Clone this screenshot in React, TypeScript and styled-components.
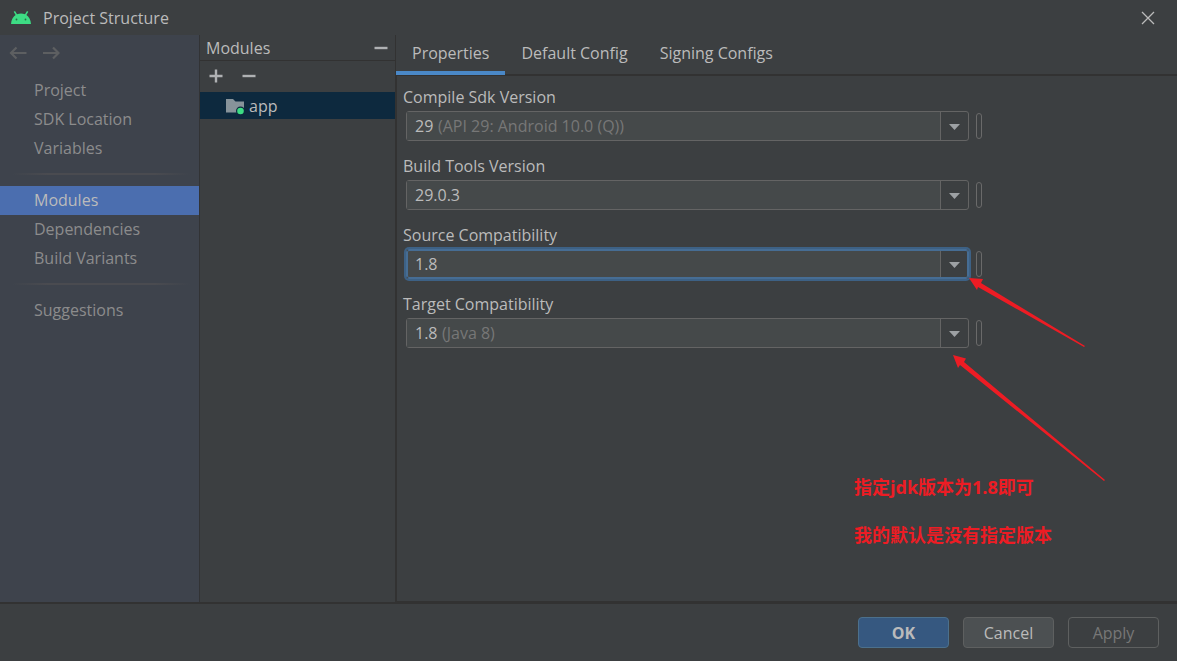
import React from "react";
import styled, { createGlobalStyle } from "styled-components";

const GlobalStyle = createGlobalStyle`
  *, *::before, *::after { box-sizing: border-box; }
  body {
    margin: 0;
    background: #3c3f41;
    color: #bbbbbb;
    font: 16px/24px "Open Sans", "Noto Sans", "Noto Sans CJK SC", sans-serif;
  }
  button, select { font: inherit; color: inherit; }
  h1, h2, p { margin: 0; font: inherit; }
`;

const Dialog = styled.div`
  position: relative;
  display: flex;
  flex-direction: column;
  min-height: 100vh;
  overflow: hidden;
`;

const TitleBar = styled.header`
  display: flex;
  align-items: center;
  gap: 12px;
  height: 35px;
  padding: 0 22px 0 11px;
`;

const Title = styled.h1`
  flex: 1;
`;

const IconButton = styled.button`
  display: flex;
  padding: 0;
  border: 0;
  background: none;
  svg { display: block; }
`;

const Body = styled.div`
  flex: 1;
  display: flex;
`;

const Sidebar = styled.nav`
  flex: 0 0 200px;
  background: #3e434c;
  border-right: 1px solid #323335;
`;

const History = styled.div`
  display: flex;
  gap: 15px;
  height: 41px;
  padding: 9px 9px 0;
`;

const NavLink = styled.a<{ $active?: boolean }>`
  display: block;
  height: 29px;
  padding-left: 34px;
  line-height: 29px;
  text-decoration: none;
  color: ${(p) => (p.$active ? "#bbbbbb" : "#8c8c8c")};
  background: ${(p) => (p.$active ? "#4b6eaf" : "transparent")};
`;

const NavDivider = styled.hr`
  height: 2px;
  margin: 10px 9px 11px 12px;
  border: 0;
  background: linear-gradient(90deg, transparent, #4a4b50 20%, #4a4b50 80%, transparent);
`;

const ModuleColumn = styled.section`
  flex: 0 0 196px;
  border-right: 1px solid #323232;
`;

const ModuleHeader = styled.div`
  display: flex;
  align-items: center;
  justify-content: space-between;
  height: 26px;
  padding: 0 6px;
  border-bottom: 1px solid #323232;
`;

const ModuleTools = styled.div`
  display: flex;
  align-items: center;
  gap: 17px;
  height: 31px;
  padding: 0 0 2px 8px;
`;

const ModuleRow = styled.button`
  display: flex;
  align-items: center;
  gap: 5px;
  width: 100%;
  height: 27px;
  padding: 0 26px;
  border: 0;
  background: #0d293e;
`;

const Main = styled.main`
  flex: 1;
  display: flex;
  flex-direction: column;
  min-width: 0;
`;

const Tabs = styled.div`
  display: flex;
  height: 41px;
  border-bottom: 2px solid #323232;
`;

const Tab = styled.button<{ $active?: boolean }>`
  height: 40px;
  padding: 0 16px 4px;
  border: 0;
  background: none;
  box-shadow: ${(p) => (p.$active ? "inset 0 -4px #4a88c7" : "none")};
`;

const Form = styled.form`
  flex: 1;
  padding: 9px 6px;
  border-left: 1px solid #323232;
  border-bottom: 1px solid #323232;
`;

const Field = styled.div`
  height: 69px;
`;

const FieldLabel = styled.label`
  display: block;
  height: 26px;
`;

const FieldLine = styled.div`
  display: flex;
  align-items: center;
  gap: 7px;
  padding-left: 3px;
`;

const Combo = styled.div<{ $focused?: boolean }>`
  flex: 0 1 563px;
  display: flex;
  height: 30px;
  border: 1px solid ${(p) => (p.$focused ? "#466d94" : "#646464")};
  border-radius: 3px;
  box-shadow: ${(p) => (p.$focused ? "0 0 0 2px #3d6185" : "none")};
  outline: ${(p) => (p.$focused ? "1px solid #466d94" : "none")};
  outline-offset: -2px;
`;

const ComboValue = styled.div`
  flex: 1;
  display: flex;
  align-items: center;
  gap: 4px;
  padding-left: 8px;
  background: #45494a;
`;

const Select = styled.select`
  appearance: none;
  padding: 0;
  border: 0;
  outline: 0;
  background: none;
`;

const Hint = styled.span`
  color: #777777;
`;

const ComboArrow = styled.button`
  width: 28px;
  padding: 1px 0 0 8px;
  border: 0;
  border-left: 1px solid #646464;
  background: none;
  svg { display: block; }
`;

const VariableButton = styled.button`
  width: 6px;
  height: 26px;
  padding: 0;
  border: 1px solid #6a6a6a;
  border-radius: 3px;
  background: none;
`;

const Footer = styled.footer`
  display: flex;
  justify-content: flex-end;
  gap: 14px;
  padding: 13px 18px;
  border-top: 2px solid #323232;
`;

type Kind = "primary" | "normal" | "disabled";

const buttonFill = { primary: "#365880", normal: "#4c5052", disabled: "transparent" };
const buttonEdge = { primary: "#4c708c", normal: "#5e6060", disabled: "#5e6060" };

const Button = styled.button<{ $kind: Kind }>`
  width: 91px;
  height: 31px;
  padding: 0;
  border: 1px solid ${(p) => buttonEdge[p.$kind]};
  border-radius: 4px;
  background: ${(p) => buttonFill[p.$kind]};
  font-weight: ${(p) => (p.$kind === "primary" ? 700 : 400)};
  color: ${(p) => (p.$kind === "disabled" ? "#777777" : "#bbbbbb")};
`;

const Arrows = styled.svg`
  position: absolute;
  top: 270px;
  left: 940px;
  pointer-events: none;
`;

const Note = styled.div`
  position: absolute;
  top: 475px;
  left: 854px;
  display: grid;
  gap: 24px;
  color: #ed1c24;
  font: 700 18px/24px "Open Sans", "Noto Sans CJK SC", sans-serif;
  white-space: nowrap;
`;

const AndroidIcon = () => (
  <svg width="20" height="14" viewBox="0 0 20 14" aria-hidden="true">
    <path d="M0 13C.2 8.500 2.200 5.500 4.600 4L2.700 .8 4 .1 6 3.200Q10 1.800 14 3.200L16 .1 17.300 .8 15.400 4C17.800 5.500 19.800 8.500 20 13Z" fill="#3ddc84" />
    <circle cx="5.500" cy="8.500" r=".9" fill="#2b6b49" />
    <circle cx="14.500" cy="8.500" r=".9" fill="#2b6b49" />
  </svg>
);

const ArrowIcon = ({ forward }: { forward?: boolean }) => (
  <svg width="18" height="18" viewBox="0 0 18 18" fill="none" stroke="#5d5f61" strokeWidth="2.200" aria-hidden="true">
    <path d={forward ? "M1 9H16.500M11 3.500L16.500 9 11 14.500" : "M17.500 9H2M7.500 3.500L2 9 7.500 14.500"} />
  </svg>
);

const LineIcon = ({ plus }: { plus?: boolean }) => (
  <svg width="16" height="16" viewBox="0 0 16 16" fill="none" stroke="#afb1b3" strokeWidth="2.400" aria-hidden="true">
    <path d={plus ? "M1.500 8H14.500M8 1.500V14.500" : "M1.500 8H14.500"} />
  </svg>
);

const FolderIcon = () => (
  <svg width="18" height="18" viewBox="0 0 18 18" aria-hidden="true">
    <path d="M0 2H7L9.500 4.500H18V15.500H0Z" fill="#87939a" />
    <circle cx="14.500" cy="14" r="4.500" fill="#0d293e" />
    <circle cx="14.500" cy="14" r="3.300" fill="#3ddc84" />
  </svg>
);

type ComboFieldProps = { id: string; label: string; value: string; hint?: string; focused?: boolean };

const ComboField = ({ id, label, value, hint, focused }: ComboFieldProps) => (
  <Field>
    <FieldLabel htmlFor={id}>{label}</FieldLabel>
    <FieldLine>
      <Combo $focused={focused}>
        <ComboValue>
          <Select id={id} defaultValue={value}>
            <option>{value}</option>
          </Select>
          {hint && <Hint>{hint}</Hint>}
        </ComboValue>
        <ComboArrow type="button" aria-label={`Open ${label}`}>
          <svg width="12" height="6" viewBox="0 0 12 6" aria-hidden="true">
            <path d="M0 0H11L5.500 6Z" fill="#9da1a4" />
          </svg>
        </ComboArrow>
      </Combo>
      <VariableButton type="button" aria-label={`Bind ${label}`} />
    </FieldLine>
  </Field>
);

const groups = [
  ["Project", "SDK Location", "Variables"],
  ["Modules", "Dependencies", "Build Variants"],
  ["Suggestions"],
];

export default function App() {
  return (
    <>
      <GlobalStyle />
      <Dialog>
        <TitleBar>
          <AndroidIcon />
          <Title>Project Structure</Title>
          <IconButton aria-label="Close">
            <svg width="14" height="14" viewBox="0 0 14 14" stroke="#bbbbbb" strokeWidth="1.300" aria-hidden="true">
              <path d="M1 1L13 13M13 1L1 13" />
            </svg>
          </IconButton>
        </TitleBar>
        <Body>
          <Sidebar>
            <History>
              <IconButton aria-label="Back"><ArrowIcon /></IconButton>
              <IconButton aria-label="Forward"><ArrowIcon forward /></IconButton>
            </History>
            {groups.map((items, i) => (
              <React.Fragment key={items[0]}>
                {i > 0 && <NavDivider />}
                {items.map((item) => (
                  <NavLink key={item} href="#" $active={item === "Modules"}>{item}</NavLink>
                ))}
              </React.Fragment>
            ))}
          </Sidebar>
          <ModuleColumn>
            <ModuleHeader>
              <h2>Modules</h2>
              <IconButton aria-label="Hide"><LineIcon /></IconButton>
            </ModuleHeader>
            <ModuleTools>
              <IconButton aria-label="Add module"><LineIcon plus /></IconButton>
              <IconButton aria-label="Remove module"><LineIcon /></IconButton>
            </ModuleTools>
            <ModuleRow><FolderIcon />app</ModuleRow>
          </ModuleColumn>
          <Main>
            <Tabs role="tablist">
              <Tab role="tab" aria-selected $active>Properties</Tab>
              <Tab role="tab">Default Config</Tab>
              <Tab role="tab">Signing Configs</Tab>
            </Tabs>
            <Form>
              <ComboField id="compile-sdk" label="Compile Sdk Version" value="29" hint="(API 29: Android 10.0 (Q))" />
              <ComboField id="build-tools" label="Build Tools Version" value="29.0.3" />
              <ComboField id="source" label="Source Compatibility" value="1.8" focused />
              <ComboField id="target" label="Target Compatibility" value="1.8" hint="(Java 8)" />
            </Form>
          </Main>
        </Body>
        <Footer>
          <Button $kind="primary">OK</Button>
          <Button $kind="normal">Cancel</Button>
          <Button $kind="disabled" disabled>Apply</Button>
        </Footer>
        <Arrows width="170" height="215" viewBox="940 270 170 215" fill="#ed1c24" aria-hidden="true">
          <path d="M969 278L983 279 981 283 1085 346 1084 347 978 287 977 290Z" />
          <path d="M953 355L966 358.500 964 362 1105 480 1104 481 960 365 958 368Z" />
        </Arrows>
        <Note>
          <p>指定jdk版本为1.8即可</p>
          <p>我的默认是没有指定版本</p>
        </Note>
      </Dialog>
    </>
  );
}
